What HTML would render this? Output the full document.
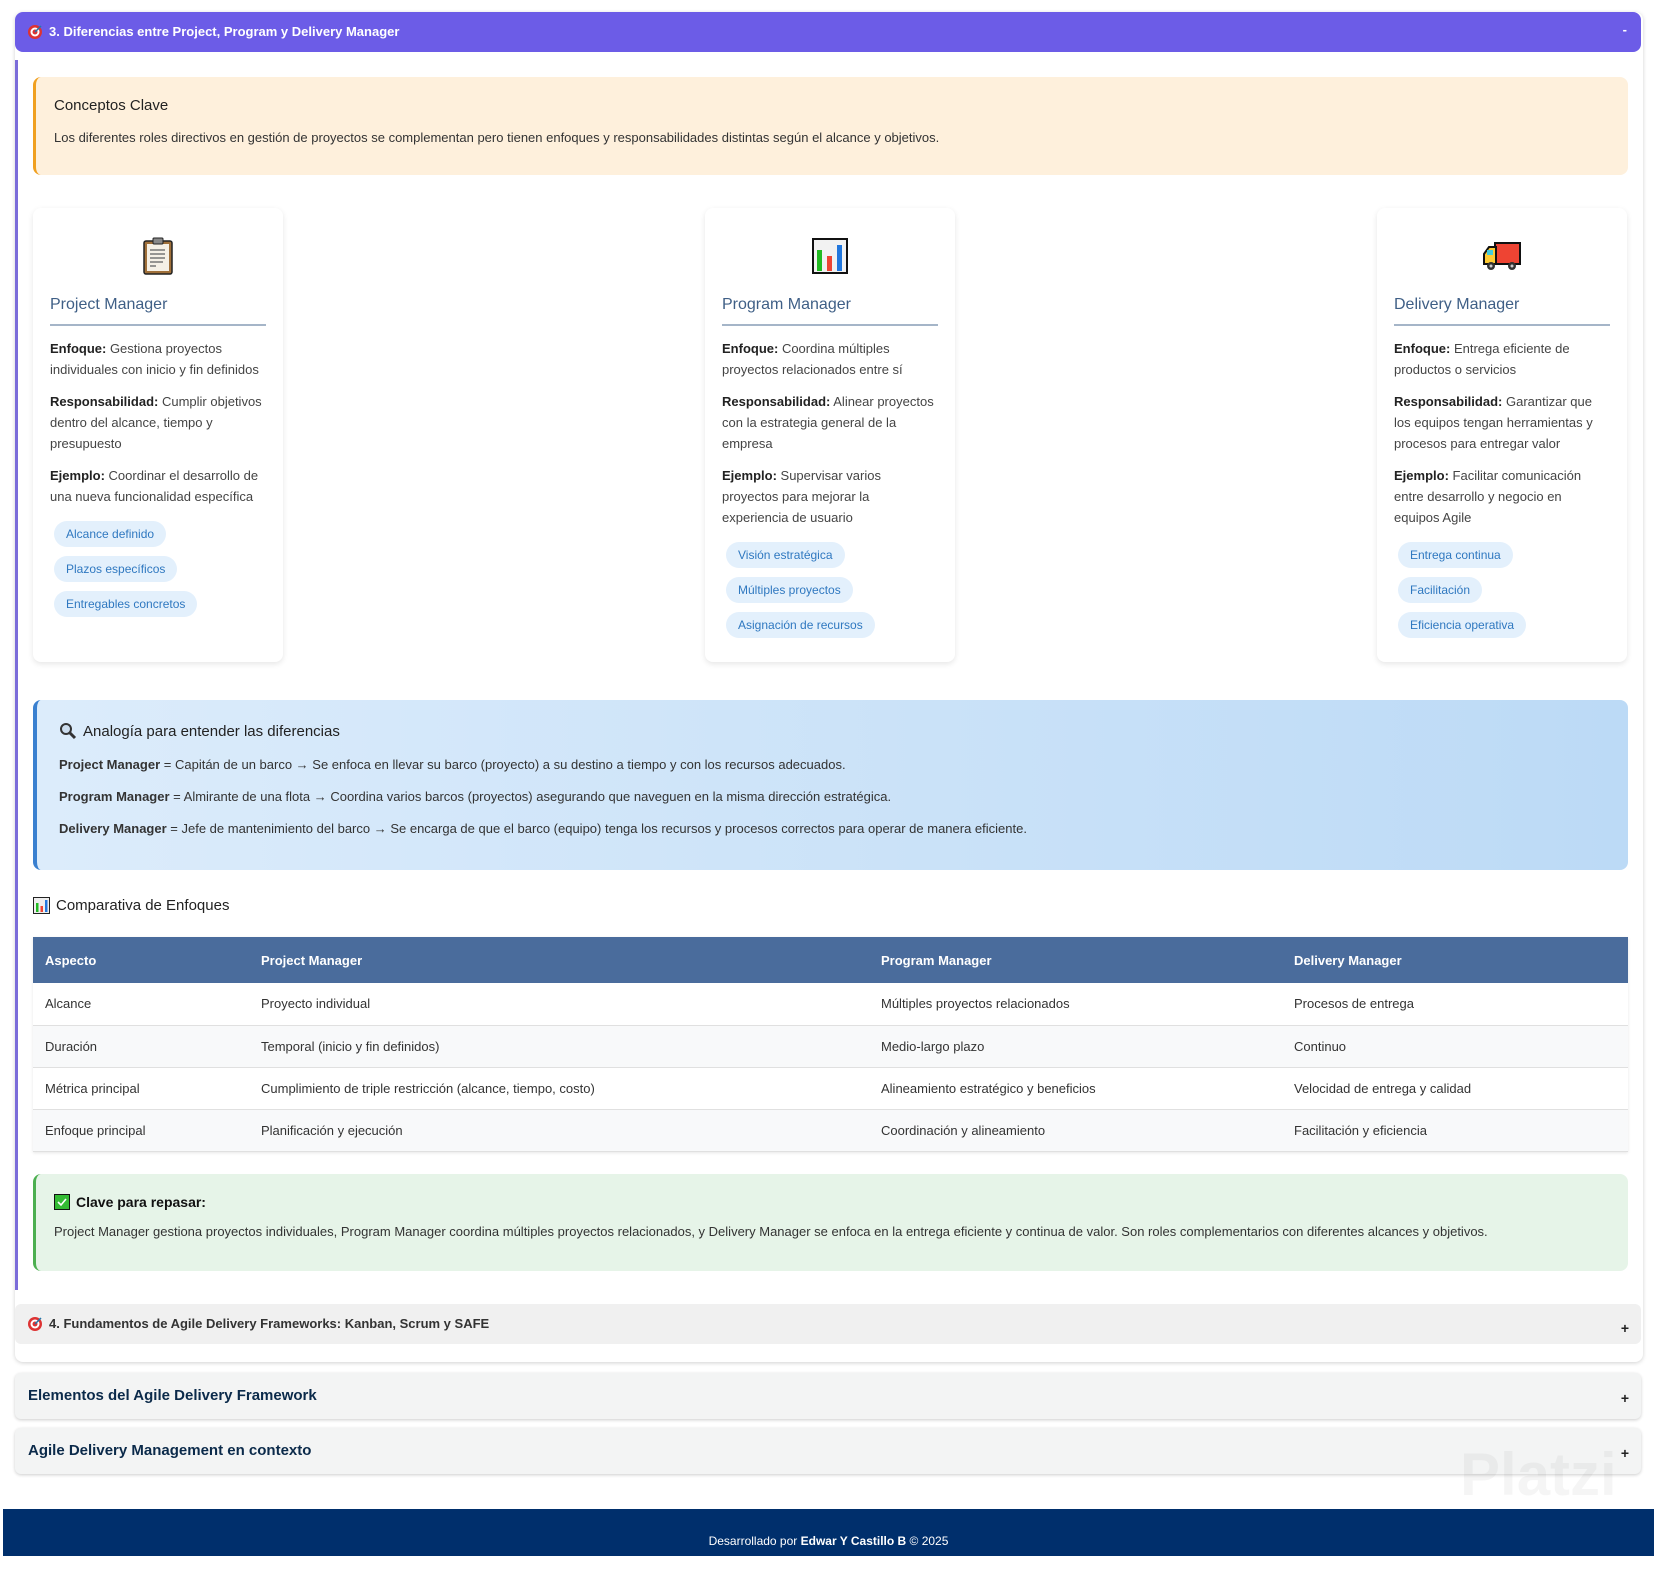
<!DOCTYPE html>
<html><head><meta charset="utf-8"><style>
*{box-sizing:border-box;margin:0;padding:0}
body{width:1654px;height:1556px;position:relative;background:#fff;font-family:"Liberation Sans","DejaVu Sans",sans-serif;font-size:13px;color:#333;overflow:hidden}
.abs{position:absolute}
.outer{left:15px;top:12px;width:1628px;height:1350px;border-radius:8px;box-shadow:0 1px 4px rgba(0,0,0,.18);background:#fff}
.hdr{left:15px;top:12px;width:1626px;height:40px;background:#6c5ce7;border-radius:8px;color:#fff;font-weight:bold;font-size:13px;line-height:40px;padding-left:34px}
.vline{left:15px;top:60px;width:3px;height:1230px;background:#7b6cd9}
.concept{left:33px;top:77px;width:1595px;height:98px;background:#fef0dc;border-left:3px solid #f0a020;border-radius:8px;padding:20px 18px}
.concept h4{font-size:15px;font-weight:normal;color:#222;margin-bottom:16px}
.card{top:208px;width:250px;height:454px;background:#fff;border-radius:8px;box-shadow:0 2px 6px rgba(0,0,0,.1);padding:24px 17px 0}
.icon{height:48px;display:flex;justify-content:center;align-items:center;margin-bottom:16px}
.card h3{font-size:16px;font-weight:normal;color:#3f5f86;padding-bottom:10px;border-bottom:2px solid #a5b5c8;margin-bottom:12px}
.card p{line-height:21px;margin-bottom:11px;color:#444}
.card p b{color:#222}
.tag{display:table;background:#e3f0fc;color:#2f78c0;border-radius:14px;padding:0 12px;height:26px;line-height:26px;font-size:12px;margin:0 0 9px 4px}
.analog{left:33px;top:700px;width:1595px;height:170px;border-left:4px solid #3a80d0;border-radius:8px;background:linear-gradient(90deg,#dcecfb,#bcdaf6);padding:22px 0 0 22px}
.analog h4{font-size:15px;font-weight:normal;color:#222;margin-bottom:14px;display:flex;align-items:center;gap:6px}
.analog p{line-height:21px;margin-bottom:11px;color:#333}
.comp{left:33px;top:897px;font-size:15px;color:#222;display:flex;align-items:center;gap:6px}
table{position:absolute;left:33px;top:937px;width:1595px;border-collapse:collapse;box-shadow:0 1px 3px rgba(0,0,0,.1)}
th{background:#4a6c9c;color:#fff;text-align:left;height:46px;padding-left:12px;font-size:13px}
td{height:42px;padding-left:12px;border-bottom:1px solid #e0e0e0;color:#333;background:#fff}
tr:nth-child(odd) td{background:#f8f9fa}
.green{left:33px;top:1174px;width:1595px;height:97px;background:#e6f4e8;border-left:3px solid #4caf50;border-radius:8px;padding:20px 18px}
.green h4{font-size:14px;color:#111;display:flex;align-items:center;gap:6px;margin-bottom:14px}
.s4{left:15px;top:1304px;width:1626px;height:40px;background:#f0f0f0;border-radius:6px;font-weight:bold;line-height:40px;padding-left:34px;color:#333}
.box{left:15px;width:1626px;height:46px;background:#f3f4f4;border-radius:6px;box-shadow:0 1px 3px rgba(0,0,0,.2);font-weight:bold;font-size:15px;color:#0b2a4a;line-height:46px;padding-left:13px}
.plus{position:absolute;right:12px;top:2px;font-size:14px;color:#222}
.footer{left:3px;top:1509px;width:1651px;height:47px;background:#002f6c;color:#fff;text-align:center;line-height:64px;font-size:12px}
</style></head><body>
<div class="abs outer"></div>
<div class="abs hdr">3. Diferencias entre Project, Program y Delivery Manager<span style="position:absolute;right:14px;top:-2px">-</span></div>
<svg class="abs" style="left:27px;top:24px" width="16" height="16" viewBox="0 0 16 16"><circle cx="8" cy="8" r="7" fill="#d33"/><circle cx="8" cy="8" r="4.5" fill="#fff"/><circle cx="8" cy="8" r="2.5" fill="#d33"/><path d="M8 8L14 2" stroke="#27a" stroke-width="1.5"/></svg>
<div class="abs vline"></div>
<div class="abs concept"><h4>Conceptos Clave</h4><div>Los diferentes roles directivos en gestión de proyectos se complementan pero tienen enfoques y responsabilidades distintas según el alcance y objetivos.</div></div>

<div class="abs card" style="left:33px"><div class="icon"><svg width="32" height="38" viewBox="0 0 32 38"><rect x="2" y="4" width="28" height="33" rx="2" fill="#a0703a" stroke="#222" stroke-width="1.5"/><rect x="5" y="7" width="22" height="27" fill="#f5f0e6"/><rect x="11" y="1" width="10" height="6" rx="1" fill="#888" stroke="#222"/><path d="M8 13h15M8 17h15M8 21h15M8 25h13M8 29h6" stroke="#777" stroke-width="1.5"/></svg></div>
<h3>Project Manager</h3>
<p><b>Enfoque:</b> Gestiona proyectos individuales con inicio y fin definidos</p>
<p><b>Responsabilidad:</b> Cumplir objetivos dentro del alcance, tiempo y presupuesto</p>
<p><b>Ejemplo:</b> Coordinar el desarrollo de una nueva funcionalidad específica</p>
<span class="tag" style="margin-top:14px">Alcance definido</span><span class="tag">Plazos específicos</span><span class="tag">Entregables concretos</span></div>

<div class="abs card" style="left:705px"><div class="icon"><svg width="36" height="36" viewBox="0 0 36 36"><rect x="1" y="1" width="34" height="34" fill="#f2f2f2" stroke="#111" stroke-width="2"/><rect x="5" y="12" width="5" height="21" fill="#2b2"/><rect x="15" y="18" width="5" height="15" fill="#e43"/><rect x="25" y="7" width="5" height="26" fill="#27d"/></svg></div>
<h3>Program Manager</h3>
<p><b>Enfoque:</b> Coordina múltiples proyectos relacionados entre sí</p>
<p><b>Responsabilidad:</b> Alinear proyectos con la estrategia general de la empresa</p>
<p><b>Ejemplo:</b> Supervisar varios proyectos para mejorar la experiencia de usuario</p>
<span class="tag" style="margin-top:14px">Visión estratégica</span><span class="tag">Múltiples proyectos</span><span class="tag">Asignación de recursos</span></div>

<div class="abs card" style="left:1377px"><div class="icon"><svg width="40" height="32" viewBox="0 0 40 32"><rect x="13" y="3" width="25" height="21" fill="#e43" stroke="#111" stroke-width="2"/><path d="M2 24V14l5-7h7v17z" fill="#fc3" stroke="#111" stroke-width="2"/><rect x="5" y="10" width="6" height="5" fill="#4cd"/><circle cx="9" cy="26" r="4" fill="#333"/><circle cx="30" cy="26" r="4" fill="#333"/><circle cx="9" cy="26" r="1.5" fill="#ccc"/><circle cx="30" cy="26" r="1.5" fill="#ccc"/></svg></div>
<h3>Delivery Manager</h3>
<p><b>Enfoque:</b> Entrega eficiente de productos o servicios</p>
<p><b>Responsabilidad:</b> Garantizar que los equipos tengan herramientas y procesos para entregar valor</p>
<p><b>Ejemplo:</b> Facilitar comunicación entre desarrollo y negocio en equipos Agile</p>
<span class="tag" style="margin-top:14px">Entrega continua</span><span class="tag">Facilitación</span><span class="tag">Eficiencia operativa</span></div>

<div class="abs analog"><h4><svg width="18" height="18" viewBox="0 0 18 18"><circle cx="7" cy="7" r="5" fill="#cde" stroke="#333" stroke-width="2"/><path d="M11 11l5 5" stroke="#333" stroke-width="3"/></svg>Analogía para entender las diferencias</h4>
<p><b>Project Manager</b> = Capitán de un barco → Se enfoca en llevar su barco (proyecto) a su destino a tiempo y con los recursos adecuados.</p>
<p><b>Program Manager</b> = Almirante de una flota → Coordina varios barcos (proyectos) asegurando que naveguen en la misma dirección estratégica.</p>
<p><b>Delivery Manager</b> = Jefe de mantenimiento del barco → Se encarga de que el barco (equipo) tenga los recursos y procesos correctos para operar de manera eficiente.</p></div>

<div class="abs comp"><svg width="17" height="17" viewBox="0 0 17 17"><rect x=".5" y=".5" width="16" height="16" fill="#eee" stroke="#222"/><rect x="3" y="6" width="2.5" height="9" fill="#2b2"/><rect x="7.5" y="9" width="2.5" height="6" fill="#e43"/><rect x="12" y="3" width="2.5" height="12" fill="#27d"/></svg>Comparativa de Enfoques</div>
<table>
<tr><th style="width:216px">Aspecto</th><th style="width:620px">Project Manager</th><th style="width:413px">Program Manager</th><th>Delivery Manager</th></tr>
<tr><td>Alcance</td><td>Proyecto individual</td><td>Múltiples proyectos relacionados</td><td>Procesos de entrega</td></tr>
<tr><td>Duración</td><td>Temporal (inicio y fin definidos)</td><td>Medio-largo plazo</td><td>Continuo</td></tr>
<tr><td>Métrica principal</td><td>Cumplimiento de triple restricción (alcance, tiempo, costo)</td><td>Alineamiento estratégico y beneficios</td><td>Velocidad de entrega y calidad</td></tr>
<tr><td>Enfoque principal</td><td>Planificación y ejecución</td><td>Coordinación y alineamiento</td><td>Facilitación y eficiencia</td></tr>
</table>

<div class="abs green"><h4><svg width="16" height="16" viewBox="0 0 16 16"><rect x=".5" y=".5" width="15" height="15" fill="#3b3" stroke="#111"/><path d="M4 8l3 3 5-6" stroke="#fff" stroke-width="1.6" fill="none"/></svg>Clave para repasar:</h4>
<div>Project Manager gestiona proyectos individuales, Program Manager coordina múltiples proyectos relacionados, y Delivery Manager se enfoca en la entrega eficiente y continua de valor. Son roles complementarios con diferentes alcances y objetivos.</div></div>

<div class="abs s4">4. Fundamentos de Agile Delivery Frameworks: Kanban, Scrum y SAFE<span class="plus" style="top:4px">+</span></div>
<svg class="abs" style="left:27px;top:1316px" width="16" height="16" viewBox="0 0 16 16"><circle cx="8" cy="8" r="7" fill="#d33"/><circle cx="8" cy="8" r="4.5" fill="#fff"/><circle cx="8" cy="8" r="2.5" fill="#d33"/><path d="M8 8L14 2" stroke="#27a" stroke-width="1.5"/></svg>
<div class="abs box" style="top:1373px">Elementos del Agile Delivery Framework<span class="plus">+</span></div>
<div class="abs box" style="top:1428px">Agile Delivery Management en contexto<span class="plus">+</span></div>
<div class="abs" style="left:1460px;top:1440px;font-size:60px;color:rgba(0,0,0,.04);font-weight:bold">Platzi</div>
<div class="abs footer">Desarrollado por <b>Edwar Y Castillo B</b> © 2025</div>
</body></html>
